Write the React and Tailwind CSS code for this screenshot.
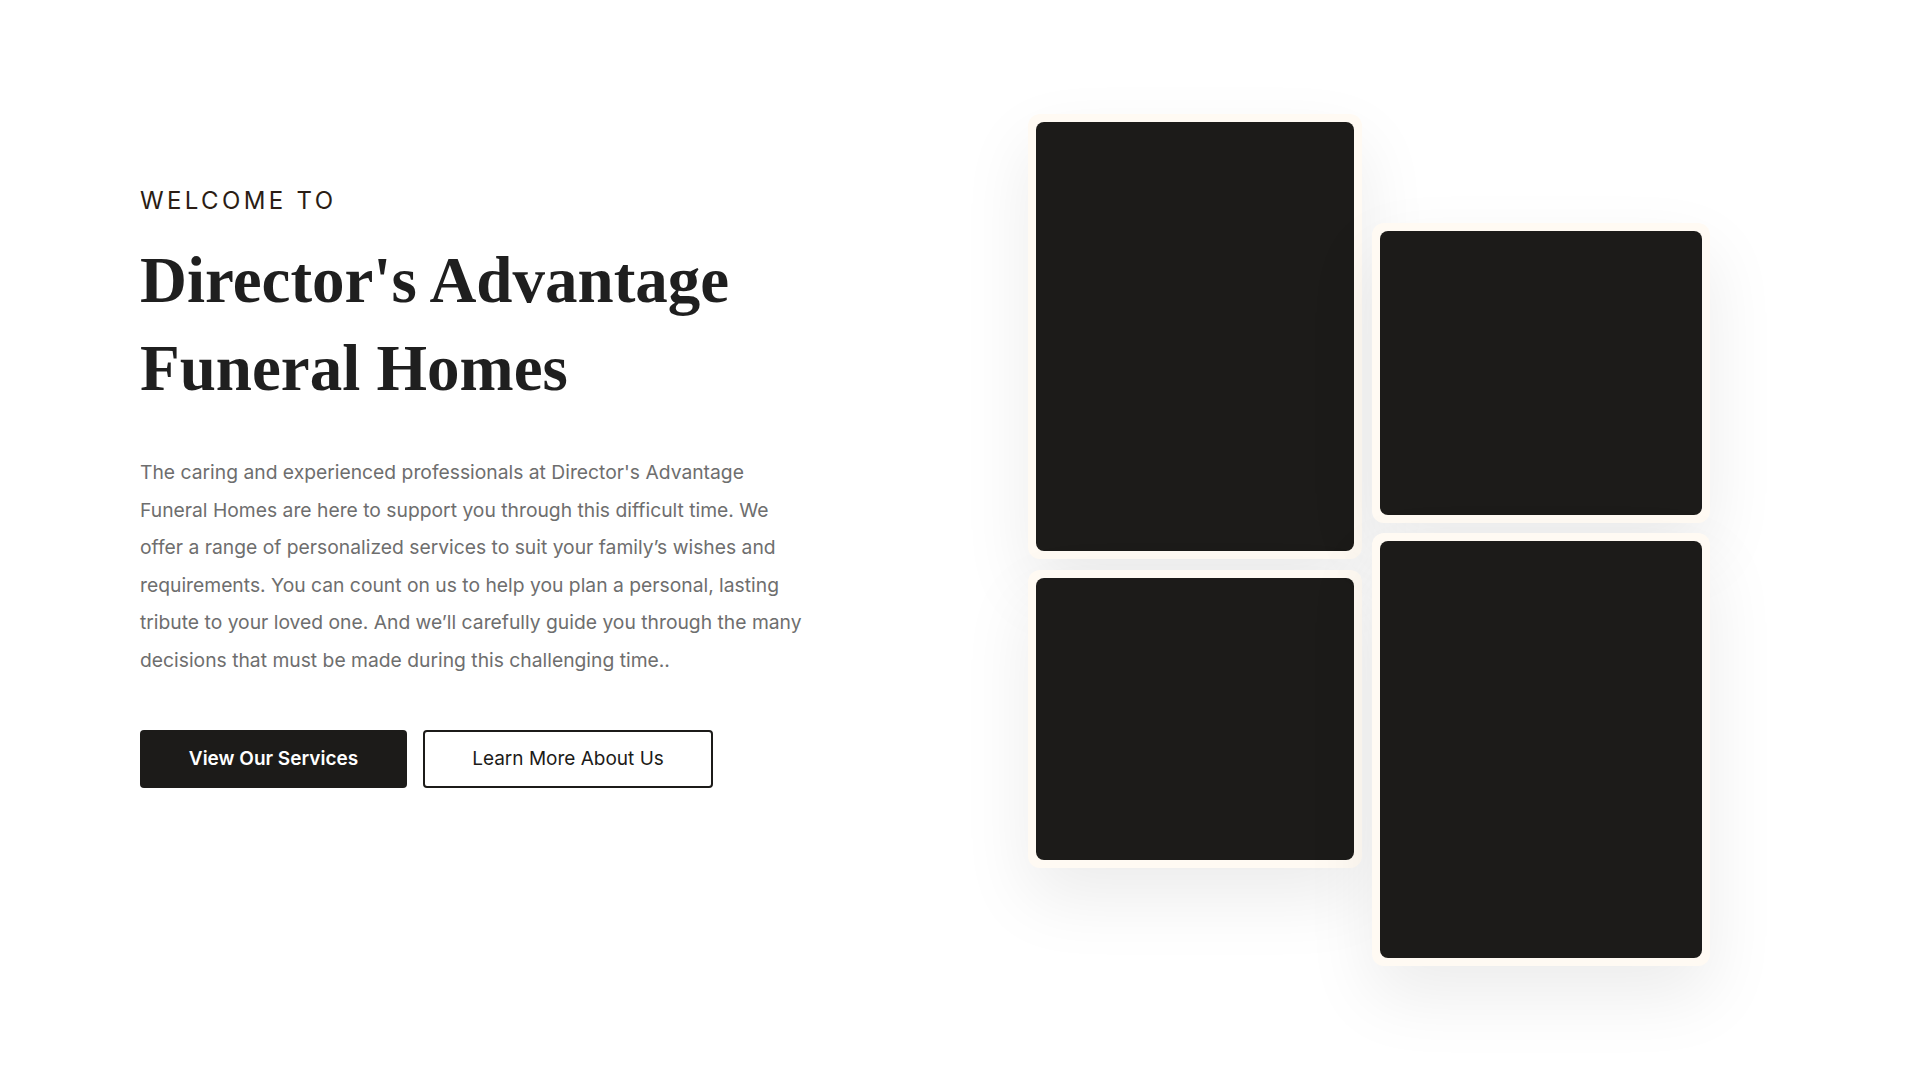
const cards = {
  left: [
    { h: 'h-[429px]', w: 'w-[318px]' },
    { h: 'h-[282px]', w: 'w-[318px]' },
  ],
  right: [
    { h: 'h-[284px]', w: 'w-[322px]' },
    { h: 'h-[417px]', w: 'w-[322px]' },
  ],
};

// copy is broken to match the original layout
const intro = [
  "The caring and experienced professionals at Director's Advantage",
  'Funeral Homes are here to support you through this difficult time. We',
  'offer a range of personalized services to suit your family’s wishes and',
  'requirements. You can count on us to help you plan a personal, lasting',
  'tribute to your loved one. And we’ll carefully guide you through the many',
  'decisions that must be made during this challenging time..',
];

function PhotoCard({ h, w }) {
  return (
    <div className="p-2 bg-[#fffaf3] rounded-xl shadow-[0_30px_70px_rgba(0,0,0,0.08)]">
      <div className={`${w} ${h} bg-[#1c1b19] rounded-lg`}></div>
    </div>
  );
}

export default function App() {
  return (
    <div className="min-h-screen w-full bg-white font-['Inter',sans-serif]">
      <div className="flex pl-[140px] pt-[114px] h-[1080px]">
        {/* Intro text */}
        <div className="w-[700px] pt-[71px] shrink-0">
          <p className="text-[24px] leading-8 tracking-[0.14em] text-[#2b1d14]">WELCOME TO</p>
          <h1 className="mt-[19px] font-['Liberation_Serif',serif] font-bold text-[65px] leading-[88px] text-[#1f1f1f]">
            Director's Advantage
            <br />
            Funeral Homes
          </h1>
          <p className="mt-[42px] text-[19.3px] leading-[37.5px] text-[#6e6e6e]">
            {intro.map((line, i) => (
              <span key={i} className="block whitespace-nowrap">
                {line}
              </span>
            ))}
          </p>
          <div className="mt-[51px] flex gap-4">
            <button className="h-[58px] w-[267px] rounded bg-[#1c1b19] text-white text-[19px] font-semibold">
              View Our Services
            </button>
            <button className="h-[58px] w-[290px] rounded border-2 border-[#1c1b19] text-[#1c1b19] text-[19px]">
              Learn More About Us
            </button>
          </div>
        </div>

        {/* Photo grid */}
        <div className="ml-[188px] flex gap-[10px] items-start">
          <div className="flex flex-col gap-[11px]">
            {cards.left.map((c, i) => (
              <PhotoCard key={i} {...c} />
            ))}
          </div>
          <div className="mt-[109px] flex flex-col gap-[10px]">
            {cards.right.map((c, i) => (
              <PhotoCard key={i} {...c} />
            ))}
          </div>
        </div>
      </div>
    </div>
  );
}
